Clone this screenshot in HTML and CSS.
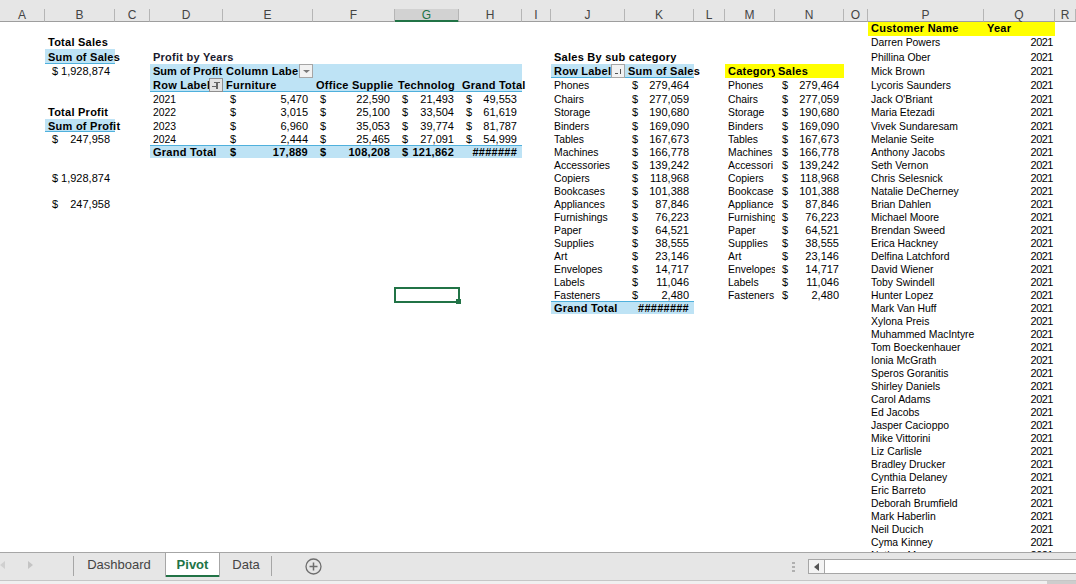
FILE: index.html
```html
<!DOCTYPE html>
<html lang="en">
<head>
  <meta charset="UTF-8">
  <title>Pivot - Excel</title>
  <link rel="stylesheet" href="styles.css">
</head>
<body>
  <div class="sheet">
    <table class="grid">
      <colgroup>
        <col class="w45"><col class="w70"><col class="w35"><col class="w73"><col class="w90"><col class="w82"><col class="w64"><col class="w63"><col class="w29">
        <col class="w74"><col class="w69"><col class="w31"><col class="w50"><col class="w69"><col class="w24"><col class="w116"><col class="w71"><col class="w21">
      </colgroup>
      <thead>
        <tr class="gap"><th colspan="18"></th></tr>
        <tr class="letters">
          <th>A</th><th>B</th><th>C</th><th>D</th><th>E</th><th>F</th><th class="picked">G</th><th>H</th><th>I</th>
          <th>J</th><th>K</th><th>L</th><th>M</th><th>N</th><th>O</th><th>P</th><th>Q</th><th>R</th>
        </tr>
      </thead>
      <tbody>
        <tr class="r14">
          <td colspan="15"></td>
          <td class="yellow bold">Customer Name</td><td class="yellow bold">Year</td><td></td>
        </tr>
        <tr class="r13">
          <td></td><td class="bold">Total Sales</td><td colspan="13"></td>
          <td>Darren Powers</td><td class="year">2021</td><td></td>
        </tr>
        <tr class="r15">
          <td></td><td class="blue head bold">Sum of Sales</td><td></td>
          <td class="bold title">Profit by Years</td><td colspan="5"></td>
          <td class="bold">Sales By sub category</td><td colspan="5"></td>
          <td>Phillina Ober</td><td class="year">2021</td><td></td>
        </tr>
        <tr class="r14">
          <td></td><td class="money"><span class="cur">$</span>1,928,874</td><td></td>
          <td class="blue bold tight">Sum of Profit</td>
          <td class="blue bold has-btn">Column Labe
            <span class="btn"><svg width="7" height="3" viewBox="0 0 7 3"><path d="M0 0h7L3.500 3z" fill="#7a7a7a"/></svg></span>
          </td>
          <td class="blue" colspan="3"></td><td></td>
          <td class="blue head bold has-btn">Row Label
            <span class="btn"><svg width="9" height="9" viewBox="0 0 9 9"><path d="M1 6h3v1H1zM6 2h1v5H6z" fill="#555"/></svg></span>
          </td>
          <td class="blue head bold">Sum of Sales</td><td></td>
          <td class="yellow bold clip">Category</td><td class="yellow bold">Sales</td><td></td>
          <td>Mick Brown</td><td class="year">2021</td><td></td>
        </tr>
        <tr class="r14">
          <td colspan="3"></td>
          <td class="blue head bold has-btn">Row Label
            <span class="btn on"><svg width="10" height="9" viewBox="0 0 10 9"><path d="M3 1h6v1H7v6H5V6H1V5h4V2H3z" fill="#666"/></svg></span>
          </td>
          <td class="blue head bold">Furniture</td><td class="blue head bold clip">Office Supplie</td><td class="blue head bold clip">Technolog</td><td class="blue head bold">Grand Total</td><td></td>
          <td>Phones</td><td class="money"><span class="cur">$</span>279,464</td><td></td>
          <td>Phones</td><td class="money"><span class="cur">$</span>279,464</td><td></td>
          <td>Lycoris Saunders</td><td class="year">2021</td><td></td>
        </tr>
        <tr class="r14">
          <td colspan="3"></td>
          <td>2021</td><td class="money"><span class="cur">$</span>5,470</td><td class="money"><span class="cur">$</span>22,590</td><td class="money"><span class="cur">$</span>21,493</td><td class="money"><span class="cur">$</span>49,553</td><td></td>
          <td>Chairs</td><td class="money"><span class="cur">$</span>277,059</td><td></td>
          <td>Chairs</td><td class="money"><span class="cur">$</span>277,059</td><td></td>
          <td>Jack O'Briant</td><td class="year">2021</td><td></td>
        </tr>
        <tr class="r13">
          <td></td><td class="bold">Total Profit</td><td></td>
          <td>2022</td><td class="money"><span class="cur">$</span>3,015</td><td class="money"><span class="cur">$</span>25,100</td><td class="money"><span class="cur">$</span>33,504</td><td class="money"><span class="cur">$</span>61,619</td><td></td>
          <td>Storage</td><td class="money"><span class="cur">$</span>190,680</td><td></td>
          <td>Storage</td><td class="money"><span class="cur">$</span>190,680</td><td></td>
          <td>Maria Etezadi</td><td class="year">2021</td><td></td>
        </tr>
        <tr class="r13">
          <td></td><td class="blue head bold">Sum of Profit</td><td></td>
          <td>2023</td><td class="money"><span class="cur">$</span>6,960</td><td class="money"><span class="cur">$</span>35,053</td><td class="money"><span class="cur">$</span>39,774</td><td class="money"><span class="cur">$</span>81,787</td><td></td>
          <td>Binders</td><td class="money"><span class="cur">$</span>169,090</td><td></td>
          <td>Binders</td><td class="money"><span class="cur">$</span>169,090</td><td></td>
          <td>Vivek Sundaresam</td><td class="year">2021</td><td></td>
        </tr>
        <tr class="r13">
          <td></td><td class="money"><span class="cur">$</span>247,958</td><td></td>
          <td>2024</td><td class="money"><span class="cur">$</span>2,444</td><td class="money"><span class="cur">$</span>25,465</td><td class="money"><span class="cur">$</span>27,091</td><td class="money"><span class="cur">$</span>54,999</td><td></td>
          <td>Tables</td><td class="money"><span class="cur">$</span>167,673</td><td></td>
          <td>Tables</td><td class="money"><span class="cur">$</span>167,673</td><td></td>
          <td>Melanie Seite</td><td class="year">2021</td><td></td>
        </tr>
        <tr class="r13">
          <td colspan="3"></td>
          <td class="blue total bold">Grand Total</td><td class="blue total bold money"><span class="cur">$</span>17,889</td><td class="blue total bold money"><span class="cur">$</span>108,208</td><td class="blue total bold money"><span class="cur">$</span>121,862</td><td class="blue total bold money">#######</td><td></td>
          <td>Machines</td><td class="money"><span class="cur">$</span>166,778</td><td></td>
          <td>Machines</td><td class="money"><span class="cur">$</span>166,778</td><td></td>
          <td>Anthony Jacobs</td><td class="year">2021</td><td></td>
        </tr>
        <tr class="r13">
          <td colspan="9"></td>
          <td>Accessories</td><td class="money"><span class="cur">$</span>139,242</td><td></td>
          <td class="clip">Accessori</td><td class="money"><span class="cur">$</span>139,242</td><td></td>
          <td>Seth Vernon</td><td class="year">2021</td><td></td>
        </tr>
        <tr class="r13">
          <td></td><td class="money"><span class="cur">$</span>1,928,874</td><td colspan="7"></td>
          <td>Copiers</td><td class="money"><span class="cur">$</span>118,968</td><td></td>
          <td>Copiers</td><td class="money"><span class="cur">$</span>118,968</td><td></td>
          <td>Chris Selesnick</td><td class="year">2021</td><td></td>
        </tr>
        <tr class="r13">
          <td colspan="9"></td>
          <td>Bookcases</td><td class="money"><span class="cur">$</span>101,388</td><td></td>
          <td class="clip">Bookcase</td><td class="money"><span class="cur">$</span>101,388</td><td></td>
          <td>Natalie DeCherney</td><td class="year">2021</td><td></td>
        </tr>
        <tr class="r13">
          <td></td><td class="money"><span class="cur">$</span>247,958</td><td colspan="7"></td>
          <td>Appliances</td><td class="money"><span class="cur">$</span>87,846</td><td></td>
          <td class="clip">Appliance</td><td class="money"><span class="cur">$</span>87,846</td><td></td>
          <td>Brian Dahlen</td><td class="year">2021</td><td></td>
        </tr>
        <tr class="r13">
          <td colspan="9"></td>
          <td>Furnishings</td><td class="money"><span class="cur">$</span>76,223</td><td></td>
          <td class="clip">Furnishing</td><td class="money"><span class="cur">$</span>76,223</td><td></td>
          <td>Michael Moore</td><td class="year">2021</td><td></td>
        </tr>
        <tr class="r13">
          <td colspan="9"></td>
          <td>Paper</td><td class="money"><span class="cur">$</span>64,521</td><td></td>
          <td>Paper</td><td class="money"><span class="cur">$</span>64,521</td><td></td>
          <td>Brendan Sweed</td><td class="year">2021</td><td></td>
        </tr>
        <tr class="r13">
          <td colspan="9"></td>
          <td>Supplies</td><td class="money"><span class="cur">$</span>38,555</td><td></td>
          <td>Supplies</td><td class="money"><span class="cur">$</span>38,555</td><td></td>
          <td>Erica Hackney</td><td class="year">2021</td><td></td>
        </tr>
        <tr class="r13">
          <td colspan="9"></td>
          <td>Art</td><td class="money"><span class="cur">$</span>23,146</td><td></td>
          <td>Art</td><td class="money"><span class="cur">$</span>23,146</td><td></td>
          <td>Delfina Latchford</td><td class="year">2021</td><td></td>
        </tr>
        <tr class="r13">
          <td colspan="9"></td>
          <td>Envelopes</td><td class="money"><span class="cur">$</span>14,717</td><td></td>
          <td class="clip">Envelopes</td><td class="money"><span class="cur">$</span>14,717</td><td></td>
          <td>David Wiener</td><td class="year">2021</td><td></td>
        </tr>
        <tr class="r13">
          <td colspan="9"></td>
          <td>Labels</td><td class="money"><span class="cur">$</span>11,046</td><td></td>
          <td>Labels</td><td class="money"><span class="cur">$</span>11,046</td><td></td>
          <td>Toby Swindell</td><td class="year">2021</td><td></td>
        </tr>
        <tr class="r13">
          <td colspan="6"></td><td class="active"><span class="handle"></span></td><td colspan="2"></td>
          <td>Fasteners</td><td class="money"><span class="cur">$</span>2,480</td><td></td>
          <td>Fasteners</td><td class="money"><span class="cur">$</span>2,480</td><td></td>
          <td>Hunter Lopez</td><td class="year">2021</td><td></td>
        </tr>
        <tr class="r13">
          <td colspan="9"></td>
          <td class="blue total bold">Grand Total</td><td class="blue total bold money">########</td><td colspan="4"></td>
          <td>Mark Van Huff</td><td class="year">2021</td><td></td>
        </tr>
        <tr class="r13"><td colspan="15"></td><td>Xylona Preis</td><td class="year">2021</td><td></td></tr>
        <tr class="r13"><td colspan="15"></td><td>Muhammed MacIntyre</td><td class="year">2021</td><td></td></tr>
        <tr class="r13"><td colspan="15"></td><td>Tom Boeckenhauer</td><td class="year">2021</td><td></td></tr>
        <tr class="r13"><td colspan="15"></td><td>Ionia McGrath</td><td class="year">2021</td><td></td></tr>
        <tr class="r13"><td colspan="15"></td><td>Speros Goranitis</td><td class="year">2021</td><td></td></tr>
        <tr class="r13"><td colspan="15"></td><td>Shirley Daniels</td><td class="year">2021</td><td></td></tr>
        <tr class="r13"><td colspan="15"></td><td>Carol Adams</td><td class="year">2021</td><td></td></tr>
        <tr class="r13"><td colspan="15"></td><td>Ed Jacobs</td><td class="year">2021</td><td></td></tr>
        <tr class="r13"><td colspan="15"></td><td>Jasper Cacioppo</td><td class="year">2021</td><td></td></tr>
        <tr class="r13"><td colspan="15"></td><td>Mike Vittorini</td><td class="year">2021</td><td></td></tr>
        <tr class="r13"><td colspan="15"></td><td>Liz Carlisle</td><td class="year">2021</td><td></td></tr>
        <tr class="r13"><td colspan="15"></td><td>Bradley Drucker</td><td class="year">2021</td><td></td></tr>
        <tr class="r13"><td colspan="15"></td><td>Cynthia Delaney</td><td class="year">2021</td><td></td></tr>
        <tr class="r13"><td colspan="15"></td><td>Eric Barreto</td><td class="year">2021</td><td></td></tr>
        <tr class="r13"><td colspan="15"></td><td>Deborah Brumfield</td><td class="year">2021</td><td></td></tr>
        <tr class="r13"><td colspan="15"></td><td>Mark Haberlin</td><td class="year">2021</td><td></td></tr>
        <tr class="r13"><td colspan="15"></td><td>Neil Ducich</td><td class="year">2021</td><td></td></tr>
        <tr class="r13"><td colspan="15"></td><td>Cyma Kinney</td><td class="year">2021</td><td></td></tr>
        <tr class="r13"><td colspan="15"></td><td>Nathan Mao</td><td class="year">2021</td><td></td></tr>
      </tbody>
    </table>
  </div>

  <div class="tabbar">
    <div class="nav">
      <svg width="5" height="8" viewBox="0 0 5 8"><path d="M5 0v8L0 4z" fill="#d0d0d0"/></svg>
      <svg width="5" height="8" viewBox="0 0 5 8"><path d="M0 0v8l5-4z" fill="#c4c4c4"/></svg>
    </div>
    <div class="tab first">Dashboard</div>
    <div class="tab current">Pivot</div>
    <div class="tab last">Data</div>
    <svg class="add" width="17" height="17" viewBox="0 0 17 17">
      <circle cx="8.500" cy="8.500" r="7.500" fill="none" stroke="#6e6e6e" stroke-width="1.300"/>
      <path d="M8.500 4.500v8M4.500 8.500h8" stroke="#6e6e6e" stroke-width="1.500"/>
    </svg>
    <div class="dots"><i></i><i></i><i></i></div>
    <div class="hscroll">
      <span class="arrow"><svg width="5" height="8" viewBox="0 0 5 8"><path d="M5 0v8L0 4z" fill="#555"/></svg></span>
    </div>
  </div>
  <div class="status"><span class="thumb"></span></div>
</body>
</html>
```

FILE: styles.css
```css
html, body {
  margin: 0;
  height: 100%;
}

body {
  display: flex;
  flex-direction: column;
  overflow: hidden;
  background: white;
  font-family: "Liberation Sans", Arial, sans-serif;
}

.sheet {
  height: 552px;
  overflow: hidden;
  flex: none;
}

/* spreadsheet grid */
.grid {
  table-layout: fixed;
  border-collapse: separate;
  border-spacing: 0;
  width: 1076px;
  font-size: 11px;
  line-height: 13px;
  color: black;
}

.w21 { width: 21px; }
.w24 { width: 24px; }
.w29 { width: 29px; }
.w31 { width: 31px; }
.w35 { width: 35px; }
.w45 { width: 45px; }
.w50 { width: 50px; }
.w63 { width: 63px; }
.w64 { width: 64px; }
.w69 { width: 69px; }
.w70 { width: 70px; }
.w71 { width: 71px; }
.w73 { width: 73px; }
.w74 { width: 74px; }
.w82 { width: 82px; }
.w90 { width: 90px; }
.w116 { width: 116px; }

.gap th {
  height: 9px;
  padding: 0;
  background: #e6e6e6;
}

.letters th {
  box-sizing: border-box;
  height: 13px;
  padding: 0;
  background: #e6e6e6;
  border-right: 1px solid #b5b5b5;
  border-bottom: 1px solid #9e9e9e;
  color: #444;
  font-weight: normal;
  font-size: 12px;
  line-height: 12px;
}

.letters th.picked {
  background: #d2d2d2;
  color: #217346;
  border-bottom-color: #217346;
  box-shadow: inset 0 -1px #217346;
}

.r13 { height: 13px; }
.r14 { height: 14px; }
.r15 { height: 15px; }

td {
  padding: 0 3px;
  white-space: nowrap;
  vertical-align: middle;
  font-size: 10.4px;
}

/* the taller top rows sit a pixel higher than the rest */
tbody tr:first-child td {
  line-height: 11px;
  padding-bottom: 2px;
}

tbody tr:nth-child(3) td,
tbody tr:nth-child(n+8) td {
  line-height: 11px;
  padding-top: 2px;
}

.bold {
  font-size: 11px;
  font-weight: bold;
  letter-spacing: 0.25px;
}

.bold.tight {
  letter-spacing: 0;
  padding-right: 0;
}

.title {
  color: #1a1a2e;
}

.clip {
  overflow: hidden;
}

.year {
  text-align: right;
  padding-right: 2px;
  font-size: 11px;
  letter-spacing: -0.5px;
}

.money {
  text-align: right;
  padding-right: 5px;
  font-size: 11px;
}

.cur {
  float: left;
  padding-left: 4px;
}

.blue {
  background: #bee3f5;
}

.head {
  box-shadow: inset 0 -1px #4fb0dc;
}

.total {
  box-shadow: inset 0 1px #4fb0dc;
}

.yellow {
  background: #ffff00;
}

/* pivot filter buttons */
.has-btn {
  position: relative;
  overflow: hidden;
}

.btn {
  position: absolute;
  right: 0;
  top: 0;
  box-sizing: border-box;
  width: 14px;
  height: 14px;
  display: flex;
  align-items: center;
  justify-content: center;
  background: #f2f2f2;
  border: 1px solid #a6a6a6;
}

.btn.on {
  background: #e4e4e4;
  border-color: #8f8f8f;
}

/* selected cell */
.active {
  position: relative;
}

.active::after {
  content: "";
  position: absolute;
  left: -1px;
  top: -1px;
  width: 66px;
  height: 16px;
  box-sizing: border-box;
  border: 2px solid #217346;
}

.handle {
  position: absolute;
  left: 61px;
  top: 11px;
  width: 5px;
  height: 5px;
  background: #217346;
  z-index: 1;
}

/* sheet tabs */
.tabbar {
  height: 29px;
  flex: none;
  box-sizing: border-box;
  display: flex;
  align-items: flex-start;
  background: #e6e6e6;
  border-top: 1px solid #a6a6a6;
  border-bottom: 1px solid #c6c6c6;
  font-size: 13px;
  color: #444;
}

.nav {
  width: 73px;
  height: 24px;
  display: flex;
  align-items: center;
  gap: 23px;
  flex: none;
  box-sizing: border-box;
}

.tab {
  box-sizing: border-box;
  height: 24px;
  line-height: 24px;
  text-align: center;
  position: relative;
}

.tab.first {
  width: 92px;
}

.tab.current {
  width: 55px;
  background: white;
  border: solid #a6a6a6;
  border-width: 0 1px;
  color: #217346;
  font-weight: bold;
  box-shadow: inset 0 -2px #217346;
}

.tab.last {
  width: 52px;
}

.tab.first::before,
.tab.last::after {
  content: "";
  position: absolute;
  top: 3px;
  height: 20px;
  width: 1px;
  background: #a6a6a6;
}

.tab.first::before {
  left: 0;
}

.tab.last::after {
  right: 0;
}

.add {
  margin: 5px 0 0 33px;
  flex: none;
}

.dots {
  margin: 9px 0 0 470px;
  width: 3px;
  display: flex;
  flex-direction: column;
  gap: 2px;
}

.dots i {
  display: block;
  width: 3px;
  height: 2px;
  background: #b0b0b0;
}

.hscroll {
  margin: 6px 0 0 13px;
  flex: 1;
  height: 15px;
  box-sizing: border-box;
  background: white;
  border: 1px solid #a6a6a6;
  border-right: 0;
}

.arrow {
  display: flex;
  width: 15px;
  height: 13px;
  align-items: center;
  justify-content: center;
  border-right: 1px solid #a6a6a6;
  background: #f4f4f4;
}

.status {
  height: 3px;
  flex: none;
  background: #f0f0f0;
  display: flex;
  justify-content: flex-end;
}

.thumb {
  width: 29px;
  background: #cdcdcd;
}
```
